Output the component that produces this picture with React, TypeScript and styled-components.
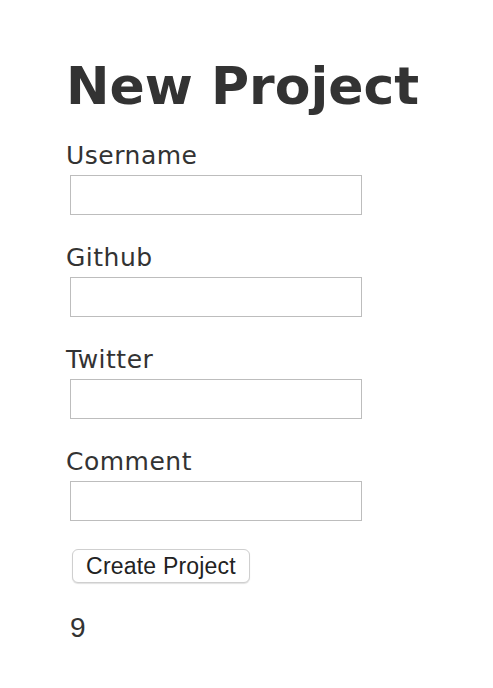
import React from "react";
import styled, { createGlobalStyle } from "styled-components";

const Global = createGlobalStyle`
  html, body { margin: 0; padding: 0; background: #ffffff; }
  body { font-family: "DejaVu Sans", Verdana, sans-serif; color: #333333; }
`;

const Page = styled.form`
  display: flex;
  flex-direction: column;
  align-items: flex-start;
  padding: 54px 0 0 64px;
`;

const Title = styled.h1`
  margin: 0 0 23px 2px;
  font-family: "DejaVu Sans", Verdana, sans-serif;
  font-weight: 700;
  font-size: 52px;
  line-height: 64px;
  color: #333333;
`;

const Field = styled.div`
  display: flex;
  flex-direction: column;
  align-items: flex-start;
  margin-bottom: 28px;
`;

const Label = styled.label`
  margin-left: 2px;
  font-size: 25px;
  letter-spacing: 0.5px;
  line-height: 30px;
  color: #333333;
`;

const Input = styled.input`
  box-sizing: border-box;
  margin: 4px 0 0 6px;
  width: 292px;
  height: 40px;
  border: 1px solid #bdbdbd;
  border-radius: 0;
  background: #ffffff;
  padding: 0 6px;
  font-size: 18px;
  outline: none;
`;

const Button = styled.button`
  box-sizing: border-box;
  margin-left: 8px;
  width: 178px;
  height: 34px;
  padding: 0;
  border: 1px solid #cfcfcf;
  border-radius: 6px;
  background: #ffffff;
  box-shadow: 0 1px 1px rgba(0, 0, 0, 0.12);
  font-family: "Liberation Sans", Arial, sans-serif;
  font-size: 23px;
  letter-spacing: 0.2px;
  line-height: 32px;
  color: #222222;
  cursor: pointer;
`;

const Count = styled.div`
  margin: 29px 0 0 6px;
  font-family: "Liberation Sans", Arial, sans-serif;
  font-size: 28px;
  line-height: 32px;
  color: #333333;
`;

const fields = ["Username", "Github", "Twitter", "Comment"];

export default function App() {
  return (
    <>
      <Global />
      <Page onSubmit={(e) => e.preventDefault()}>
        <Title>New Project</Title>
        {fields.map((f) => (
          <Field key={f}>
            <Label htmlFor={f}>{f}</Label>
            <Input id={f} type="text" />
          </Field>
        ))}
        <Button type="submit">Create Project</Button>
        <Count>9</Count>
      </Page>
    </>
  );
}
